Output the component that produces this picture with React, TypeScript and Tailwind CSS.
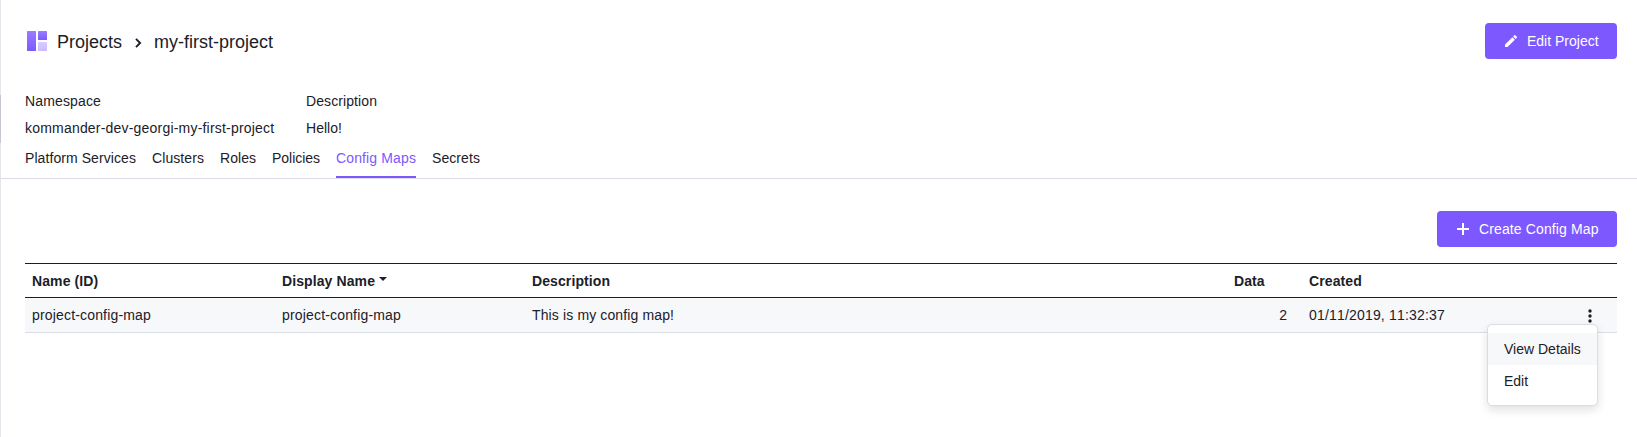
import React from "react";

const tabs = [
  { label: "Platform Services", tracking: "tracking-[0.076px]" },
  { label: "Clusters", tracking: "tracking-[0.081px]" },
  { label: "Roles", tracking: "tracking-[0.04px]" },
  { label: "Policies", tracking: "tracking-[-0.03px]" },
  { label: "Config Maps", tracking: "tracking-[0.127px]", active: true },
  { label: "Secrets", tracking: "tracking-[0.076px]" },
];

function ProjectsIcon() {
  return (
    <svg width="20" height="20" viewBox="0 0 20 20" className="block">
      <defs>
        <linearGradient id="tile" x1="0" y1="0" x2="0" y2="1">
          <stop offset="0" stopColor="#9a7cff" />
          <stop offset="1" stopColor="#7d58ff" />
        </linearGradient>
        <linearGradient id="tile-light" x1="0" y1="0" x2="0" y2="1">
          <stop offset="0" stopColor="#d8ccff" />
          <stop offset="1" stopColor="#cbbcff" />
        </linearGradient>
      </defs>
      <rect width="9" height="20" rx="0.5" fill="url(#tile)" />
      <rect x="11" width="9" height="9" rx="0.5" fill="url(#tile)" />
      <rect x="11" y="11" width="9" height="9" rx="0.5" fill="url(#tile-light)" />
    </svg>
  );
}

function PencilIcon() {
  return (
    <svg width="12" height="12" viewBox="3 3 18 18" fill="#fff" className="block">
      <path d="M3 17.25V21h3.75L17.81 9.94l-3.75-3.75L3 17.25zM20.71 7.04a1 1 0 0 0 0-1.41l-2.34-2.34a1 1 0 0 0-1.41 0l-1.83 1.83 3.75 3.75 1.83-1.83z" />
    </svg>
  );
}

function PlusIcon() {
  return (
    <svg width="12" height="12" viewBox="0 0 12 12" fill="#fff" className="block">
      <path d="M5 0h2v5h5v2H7v5H5V7H0V5h5z" />
    </svg>
  );
}

function Button({ icon, children, className }: { icon: React.ReactNode; children: React.ReactNode; className: string }) {
  return (
    <button className={`flex h-9 items-center gap-[10px] rounded bg-[#7d58ff] pl-5 leading-[21px] text-white ${className}`}>
      {icon}
      <span className="whitespace-nowrap">{children}</span>
    </button>
  );
}

export default function App() {
  return (
    <div className="flex h-[437px] w-[1637px] overflow-hidden bg-white font-['Liberation_Sans',Arial,sans-serif] text-sm leading-[21px] text-[#1b2029]">
      <div className="flex w-px shrink-0 flex-col bg-[#e5e5ec]">
        <div className="mt-[95px] h-12 bg-[#c4c7cf]" />
      </div>
      <main className="flex min-w-0 flex-1 flex-col">
        <header className="flex h-[59px] items-end justify-between pr-5 pl-[26px]">
          <div className="flex h-9 items-center text-lg leading-7">
            <ProjectsIcon />
            <span className="ml-[10px] w-[65px] pt-px whitespace-nowrap">Projects</span>
            <svg width="8" height="10" viewBox="0 0 8 10" fill="none" stroke="#1b2029" strokeWidth="1.9" className="mt-1 ml-[13px] block">
              <path d="M1 0.9L5.1 5L1 9.1" />
            </svg>
            <span className="ml-[11px] pt-px whitespace-nowrap">my-first-project</span>
          </div>
          <Button icon={<PencilIcon />} className="w-[132px]">Edit Project</Button>
        </header>

        <dl className="mt-8 grid grid-cols-[281px_auto] gap-y-[6px] pl-6">
          <dt className="tracking-[0.14px]">Namespace</dt>
          <dt className="tracking-[0.09px]">Description</dt>
          <dd className="tracking-[0.2px]">kommander-dev-georgi-my-first-project</dd>
          <dd className="tracking-[0.03px]">Hello!</dd>
        </dl>

        <nav className="flex h-[40px] gap-4 border-b border-[#dadde6] pl-6">
          {tabs.map((tab) => (
            <a
              key={tab.label}
              className={`pt-[9px] ${tab.tracking} ${tab.active ? "border-b-2 border-[#7d58ff] text-[#7d58ff]" : ""}`}
            >
              {tab.label}
            </a>
          ))}
        </nav>

        <section className="flex flex-col pt-8 pr-5 pl-6">
          <Button icon={<PlusIcon />} className="w-[180px] self-end tracking-[0.125px]">Create Config Map</Button>
          <div className="mt-4">
            <div className="grid h-[35px] grid-cols-[250px_250px_702px_75px_auto] items-center border-y border-[#1b1d29] pt-px pl-[7px] font-bold tracking-[0.1px]">
              <span>Name (ID)</span>
              <span className="flex items-center gap-1">
                Display Name
                <svg width="8" height="4" viewBox="0 0 8 4" fill="#1b2029" className="-mt-1 block">
                  <path d="M0 0h8L4 4z" />
                </svg>
              </span>
              <span>Description</span>
              <span>Data</span>
              <span>Created</span>
            </div>
            <div className="relative grid h-[35px] grid-cols-[250px_250px_702px_53px_22px_1fr_auto] items-center border-b border-[#dadde6] bg-[#f7f8fa] pl-[7px]">
              <span className="tracking-[0.169px]">project-config-map</span>
              <span className="tracking-[0.169px]">project-config-map</span>
              <span className="tracking-[0.13px]">This is my config map!</span>
              <span className="text-right">2</span>
              <span />
              <span className="tracking-[0.18px] [font-kerning:none]">01/11/2019, 11:32:37</span>
              <svg width="4" height="14" viewBox="0 0 4 14" fill="#1b2029" className="mr-[25px] mt-[1px] block">
                <circle cx="2" cy="2" r="1.7" />
                <circle cx="2" cy="7" r="1.7" />
                <circle cx="2" cy="12" r="1.7" />
              </svg>
              <div className="absolute top-[26px] right-[19px] h-[82px] w-[111px] rounded-[5px] border border-[#dadde6] bg-white py-2 shadow-[0_4px_10px_rgba(0,0,0,0.12)]">
                <div className="flex h-8 items-center bg-[#f7f8fa] pl-4">View Details</div>
                <div className="flex h-8 items-center pl-4">Edit</div>
              </div>
            </div>
          </div>
        </section>
      </main>
    </div>
  );
}
